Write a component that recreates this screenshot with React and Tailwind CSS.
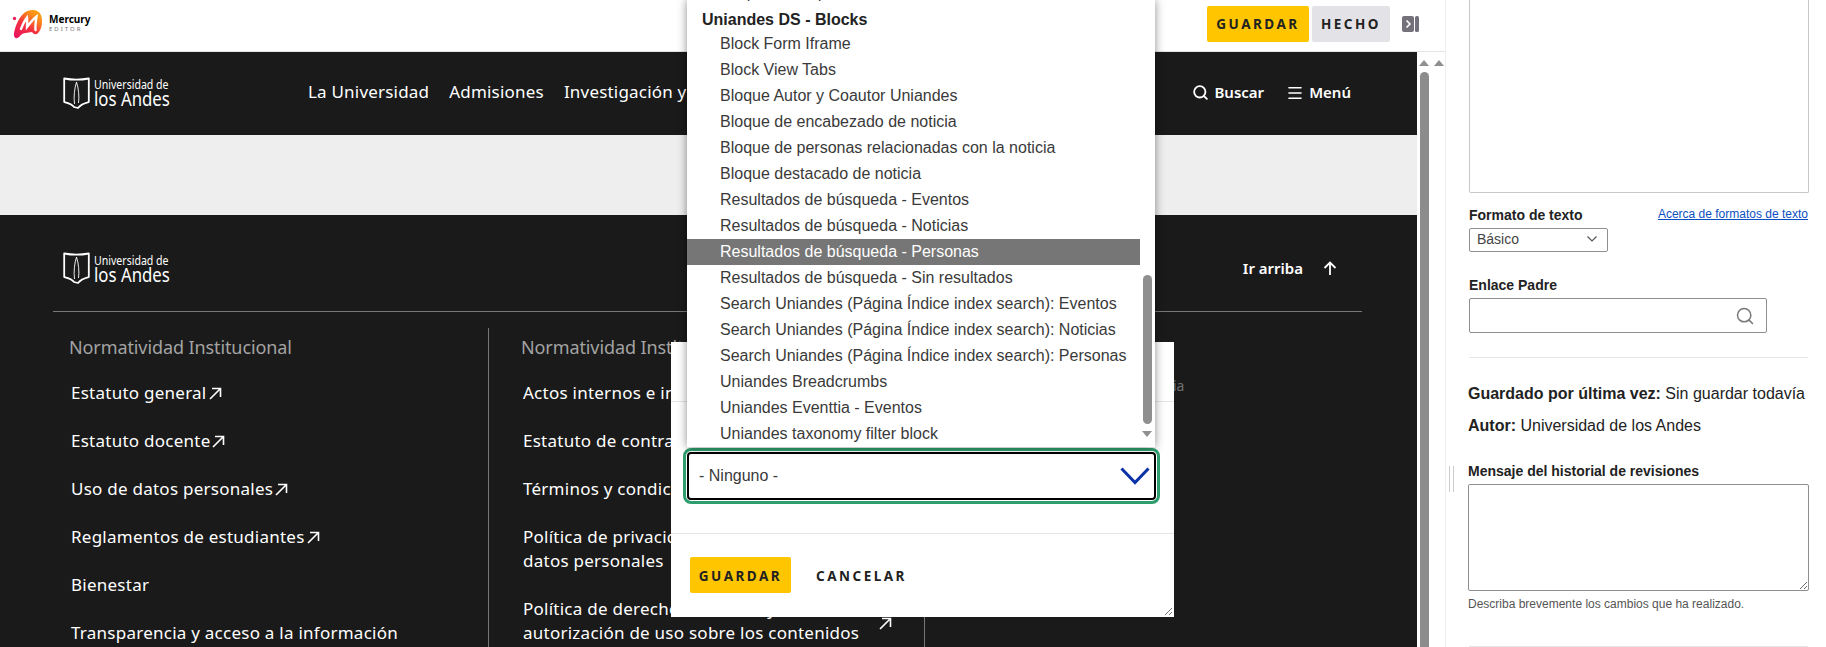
import { Search, Menu } from 'lucide-react'

const UI = "font-['Noto_Sans',sans-serif]"
const ARIAL = "font-['Liberation_Sans',Arial,sans-serif]"

const COL_1 = [
  { t: ['Estatuto general'], ext: true },
  { t: ['Estatuto docente'], ext: true },
  { t: ['Uso de datos personales'], ext: true },
  { t: ['Reglamentos de estudiantes'], ext: true },
  { t: ['Bienestar'] },
  { t: ['Transparencia y acceso a la información'] },
]

const COL_2 = [
  { t: ['Actos internos e institucionales'] },
  { t: ['Estatuto de contratación'] },
  { t: ['Términos y condiciones'] },
  { t: ['Política de privacidad y tratamiento de', 'datos personales'] },
  { t: ['Política de derechos de autor y', 'autorización de uso sobre los contenidos'], raised: true },
]

const BLOQUES = [
  'Block Form Iframe',
  'Block View Tabs',
  'Bloque Autor y Coautor Uniandes',
  'Bloque de encabezado de noticia',
  'Bloque de personas relacionadas con la noticia',
  'Bloque destacado de noticia',
  'Resultados de búsqueda - Eventos',
  'Resultados de búsqueda - Noticias',
  'Resultados de búsqueda - Personas',
  'Resultados de búsqueda - Sin resultados',
  'Search Uniandes (Página Índice index search): Eventos',
  'Search Uniandes (Página Índice index search): Noticias',
  'Search Uniandes (Página Índice index search): Personas',
  'Uniandes Breadcrumbs',
  'Uniandes Eventtia - Eventos',
  'Uniandes taxonomy filter block',
]

function MercuryLogo() {
  return (
    <div className="flex items-center gap-[6px]">
      <svg width="31" height="31" viewBox="0 0 31 31">
        <defs>
          <linearGradient id="merc" x1="0.1" y1="1" x2="0.8" y2="0">
            <stop offset="0" stopColor="#e8145f" />
            <stop offset="0.45" stopColor="#f5303f" />
            <stop offset="0.8" stopColor="#fb8a1a" />
            <stop offset="1" stopColor="#fda40f" />
          </linearGradient>
        </defs>
        <circle cx="2.5" cy="9.5" r="1.7" fill="#ea1f5c" />
        <path
          d="M8 27C5 31 1 29 2 24C3 18 6 10 11 5C16 0 26-1 29 6C31 12 30 19 27 23C24 27 21 25 20 23C16 24 11 23 8 27Z"
          fill="url(#merc)"
        />
        <path
          d="M9 20C11 15 13 11 15 8.500C15.500 12 15 15 15 18C18 14 21 10 24.500 7.500C24 12 23 16 23.500 21"
          fill="none"
          stroke="#fff"
          strokeWidth="2.4"
          strokeLinecap="round"
        />
      </svg>
      <div className={`${UI} flex flex-col -mt-[2px]`}>
        <span className="text-[10px] leading-[12px] font-bold text-black">Mercury</span>
        <span className="text-[6px] leading-[8px] tracking-[2px] text-[#777]">EDITOR</span>
      </div>
    </div>
  )
}

function UniandesLogo() {
  return (
    <div className="flex items-center gap-[4px] text-white">
      <svg width="27" height="33" viewBox="0 0 27 33" fill="none" stroke="#fff">
        <path d="M1.200 2.500C8 3.800 19 3.800 25.800 2.500V26C22 27 18 28 15 32L11 31C9 28 5 27 1.200 26Z" strokeWidth="1.800" strokeLinejoin="round" />
        <path d="M13.500 6C11.500 12 10.500 21 11.500 28M13.500 6C15.500 12 16.500 21 15.500 27" strokeWidth="0.900" />
      </svg>
      <div className={`${UI} w-[76px] flex flex-col whitespace-nowrap`}>
        <span className="block origin-left scale-x-[0.88] text-[12px] leading-[13px]">Universidad de</span>
        <span className="block origin-left scale-x-[0.84] text-[20px] leading-[15px]">los Andes</span>
      </div>
    </div>
  )
}

function ArrowExt({ raised }) {
  return (
    <svg
      width="13"
      height="13"
      viewBox="0 0 13 13"
      fill="none"
      stroke="currentColor"
      strokeWidth="1.600"
      className={raised ? 'inline-block ml-[20px] relative -top-[11px]' : 'inline-block ml-[2px] align-[-1px]'}
    >
      <path d="M1 12L11.500 1.500M3 1.500H11.500V10" />
    </svg>
  )
}

function FooterColumn({ titulo, links, className }) {
  return (
    <div className={className}>
      <h3 className="text-[18px] leading-[24px] tracking-[-0.100px] text-[#a3a3a3] whitespace-nowrap">{titulo}</h3>
      <ul className="mt-[22px] pl-[2px] flex flex-col gap-[24px]">
        {links.map((l) => (
          <li key={l.t[0]} className="text-[17px] leading-[24px] tracking-[0.250px] text-white whitespace-nowrap">
            {l.t.map((linea, i) => (
              <span key={linea}>
                {i > 0 && <br />}
                {linea}
              </span>
            ))}
            {(l.ext || l.raised) && <ArrowExt raised={l.raised} />}
          </li>
        ))}
      </ul>
    </div>
  )
}

function Triangle() {
  return (
    <svg width="10" height="6" viewBox="0 0 10 6" className="fill-[#8f8f8f]">
      <path d="M5 0L10 6H0Z" />
    </svg>
  )
}

function BloqueDropdown() {
  return (
    <div className={`${ARIAL} absolute left-[687px] top-0 w-[468px] h-[447px] overflow-hidden bg-white shadow-[0_0_9px_rgba(0,0,0,0.45)] text-[16px] leading-[26px] text-[#3a3a3a]`}>
      <div className="-mt-[21px] pr-[15px]">
        <div className="relative top-[1px] pl-[33px]">Grupo de bloques</div>
        <div className="relative top-[2px] pl-[15px] font-bold text-[#222]">Uniandes DS - Blocks</div>
        {BLOQUES.map((b) => (
          <div
            key={b}
            className={`pl-[33px] whitespace-nowrap ${b === 'Resultados de búsqueda - Personas' ? 'bg-[#767676] text-white' : ''}`}
          >
            {b}
          </div>
        ))}
      </div>
      {/* scrollbar */}
      <div className="absolute left-[456px] top-[275px] w-[9px] h-[149px] rounded-full bg-[#8f8f8f]" />
      <svg width="10" height="6" viewBox="0 0 10 6" className="absolute left-[455px] top-[431px] fill-[#8f8f8f]">
        <path d="M0 0H10L5 6Z" />
      </svg>
    </div>
  )
}

function BloqueModal() {
  return (
    <div className="absolute left-[671px] top-[342px] w-[503px] h-[275px] bg-white">
      <div className="h-[60px] border-b border-[#e5e5e5]" />
      <div className="h-[132px] border-b border-[#e5e5e5] pt-[50px] pl-[16px]">
        <div className={`${ARIAL} w-[469px] h-[48px] flex items-center justify-between pl-[10px] pr-[4px] rounded-[4px] border-[2px] border-black outline-[3px] outline-offset-[1px] outline-[#2f9e6e] text-[16px] text-[#3a3a3a]`}>
          <span>- Ninguno -</span>
          <svg width="30" height="18" viewBox="0 0 30 18" fill="none" stroke="#0b32a8" strokeWidth="3">
            <path d="M1.500 1.500L15 15.500L28.500 1.500" />
          </svg>
        </div>
      </div>
      <div className={`${UI} flex items-center pl-[19px] pt-[23px] text-[13.500px] font-bold tracking-[2.500px] text-[#222]`}>
        <button className="w-[101px] h-[36px] pt-[2px] rounded-[2px] bg-[#ffc600]">GUARDAR</button>
        <button className="ml-[25px] pt-[2px]">CANCELAR</button>
      </div>
      <svg width="9" height="9" viewBox="0 0 9 9" stroke="#777" className="absolute right-[1px] bottom-[1px]">
        <path d="M1 8L8 1M5 8L8 5" />
      </svg>
    </div>
  )
}

function Sidebar() {
  return (
    <aside className={`${ARIAL} relative w-[381px] border-l border-[#eeeeee] pl-[23px] pr-[17px] text-[#222]`}>
      <div className="absolute left-[3px] top-[466px] w-[5px] h-[26px] border-x border-[#cccccc]" />
      <div className="h-[193px] w-[340px] rounded-b-[2px] border-x border-b border-[#c8c8c8]" />

      <div className="mt-[12px] flex justify-between items-start w-[339px]">
        <span className="text-[14px] leading-[20px] font-bold">Formato de texto</span>
        <a className="mt-[1px] text-[12px] leading-[16px] text-[#0b4fc0] underline">Acerca de formatos de texto</a>
      </div>
      <div className="mt-[3px] w-[139px] h-[24px] flex items-center justify-between pl-[7px] pr-[10px] pb-[2px] rounded-[2px] border border-[#8f8f8f] text-[14px] text-[#444]">
        <span>Básico</span>
        <svg width="10" height="6" viewBox="0 0 10 6" fill="none" stroke="#555" strokeWidth="1.200">
          <path d="M0.500 0.500L5 5L9.500 0.500" />
        </svg>
      </div>

      <div className="mt-[23px] text-[14px] leading-[20px] font-bold">Enlace Padre</div>
      <div className="mt-[3px] w-[298px] h-[35px] flex items-center justify-end pr-[11px] rounded-[2px] border border-[#8f8f8f]">
        <Search size={20} className="text-[#777]" strokeWidth={1.800} />
      </div>

      <div className="mt-[24px] w-[339px] border-t border-[#e6e6e6]" />

      <div className="-ml-[1px]">
        <p className="mt-[24px] text-[16px] leading-[24px] whitespace-nowrap">
          <b>Guardado por última vez:</b> Sin guardar todavía
        </p>
        <p className="mt-[8px] text-[16px] leading-[24px]">
          <b>Autor:</b> Universidad de los Andes
        </p>

        <div className="mt-[23px] text-[14px] leading-[20px] font-bold">Mensaje del historial de revisiones</div>
        <textarea
          readOnly
          className="block mt-[3px] w-[341px] h-[107px] rounded-[2px] border border-[#8f8f8f]"
        />
        <p className="mt-[5px] text-[12px] leading-[16px] text-[#555]">Describa brevemente los cambios que ha realizado.</p>
      </div>
      <div className="mt-[34px] w-[339px] border-t border-[#e6e6e6]" />
    </aside>
  )
}

export default function App() {
  return (
    <div className="relative flex w-[1826px] h-[647px] overflow-hidden bg-white">
      <div className="w-[1445px] flex flex-col">
        {/* Barra del editor */}
        <div className={`${UI} h-[52px] flex items-center pl-[12px] pb-[3px] border-b border-[#e5e5e5]`}>
          <MercuryLogo />
          <div className="ml-auto flex items-center gap-[3px] text-[13.500px] font-bold tracking-[2.500px] text-[#222]">
            <button className="w-[102px] h-[36px] rounded-[2px] bg-[#ffc600]">GUARDAR</button>
            <button className="w-[78px] h-[36px] rounded-[2px] bg-[#e3e2e6]">HECHO</button>
          </div>
          <svg width="17" height="16" viewBox="0 0 17 16" className="ml-[12px] mr-[26px]">
            <rect width="12" height="16" rx="2" fill="#74717a" />
            <rect x="13" width="4" height="16" rx="1.500" fill="#74717a" />
            <path d="M4.500 4.500L8 8L4.500 11.500" fill="none" stroke="#fff" strokeWidth="1.600" />
          </svg>
        </div>

        <div className="flex flex-1 min-h-0">
          <div className={`${UI} w-[1417px] flex flex-col bg-[#1a1a1a] text-white`}>
            {/* Header */}
            <header className="h-[83px] flex items-center pl-[63px] pr-[66px] pb-[2px]">
              <div className="-mt-[1px]">
                <UniandesLogo />
              </div>
              <nav className="ml-[138px] -mt-[2px] flex gap-[20px] text-[17px] leading-[24px] tracking-[0.200px] whitespace-nowrap">
                <span>La Universidad</span>
                <span>Admisiones</span>
                <span>Investigación y Creación</span>
              </nav>
              <div className="ml-auto flex items-center text-[15px] font-semibold">
                <Search size={17} strokeWidth={2.600} />
                <span className="ml-[5px]">Buscar</span>
                <Menu size={18} strokeWidth={2.200} className="ml-[22px]" />
                <span className="ml-[5px]">Menú</span>
              </div>
            </header>

            <div className="h-[80px] bg-[#eeeeee]" />

            {/* Footer */}
            <footer className="flex-1 min-h-0 overflow-hidden ml-[53px] mr-[55px] pt-[36px]">
              <div className="h-[61px] flex items-start border-b border-[#777] pl-[10px] pr-[25px]">
                <UniandesLogo />
                <div className="ml-auto mt-[6px] flex items-center gap-[20px] text-[15px] font-semibold">
                  <span>Ir arriba</span>
                  <svg width="14" height="14" viewBox="0 0 14 14" fill="none" stroke="#fff" strokeWidth="1.800">
                    <path d="M7 14V1.500M1.500 7L7 1.500L12.500 7" />
                  </svg>
                </div>
              </div>
              <div className="mt-[16px] flex">
                <FooterColumn
                  titulo="Normatividad Institucional"
                  links={COL_1}
                  className="w-[435px] pl-[16px] pt-[7px] h-[320px]"
                />
                <FooterColumn
                  titulo="Normatividad Institucional"
                  links={COL_2}
                  className="w-[436px] pl-[32px] pt-[7px] h-[320px] border-l border-[#777]"
                />
                <div className="flex-1 border-l border-[#777] pl-[248px] pt-[46px] text-[14px] leading-[24px] text-[#6f6f6f] whitespace-nowrap">
                  ia
                </div>
              </div>
            </footer>
          </div>

          {/* Barras de scroll */}
          <div className="flex flex-1 pt-[8px]">
            <div className="w-[14px] flex flex-col items-center">
              <Triangle />
              <div className="mt-[6px] flex-1 w-[9px] rounded-t-full bg-[#8c8c8c]" />
            </div>
            <div className="w-[14px] flex justify-center pl-[2px]">
              <Triangle />
            </div>
          </div>
        </div>
      </div>

      <Sidebar />

      <BloqueModal />
      <BloqueDropdown />
    </div>
  )
}
